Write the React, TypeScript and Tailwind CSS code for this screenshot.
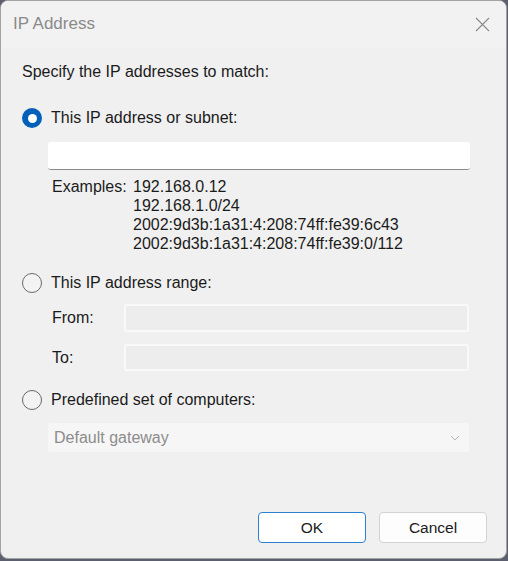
import React from 'react'

const Radio: React.FC<{ checked?: boolean }> = ({ checked }) =>
  checked ? (
    <span className="flex h-[20px] w-[20px] shrink-0 items-center justify-center rounded-full bg-[#005fb8]">
      <span className="h-[9px] w-[9px] rounded-full bg-white" />
    </span>
  ) : (
    <span className="h-[20px] w-[20px] shrink-0 rounded-full border-[1.5px] border-[#6a6a6a] bg-[#f3f3f3]" />
  )

const DisabledBox: React.FC<{ h: string }> = ({ h }) => (
  <div className={`w-[345px] ${h} rounded-[3px] border-2 border-[#f9f9f9] bg-[#ededed]`} />
)

export default function App() {
  const examples = [
    '192.168.0.12',
    '192.168.1.0/24',
    '2002:9d3b:1a31:4:208:74ff:fe39:6c43',
    '2002:9d3b:1a31:4:208:74ff:fe39:0/112',
  ]

  return (
    <div
      className="h-[561px] w-[508px] bg-[#5c5f6e] text-[16px] text-[#1b1b1b]"
      style={{ fontFamily: '"Liberation Sans", Arial, sans-serif' }}
    >
      <div className="flex h-[559px] w-[507px] flex-col overflow-hidden rounded-[8px] border border-[#a3a3a3] bg-[#f0f0f0]">
        {/* title bar */}
        <div className="flex h-[47px] shrink-0 items-center justify-between bg-[#f2f2f2] pl-[12px] pr-[16px]">
          <span className="mt-[-1px] text-[17px] text-[#8a8a8a]">IP Address</span>
          <svg width="15" height="15" viewBox="0 0 15 15" className="mt-[-1px]">
            <path d="M1 1 L14 14 M14 1 L1 14" stroke="#8a8a8a" strokeWidth="1.1" />
          </svg>
        </div>

        {/* body */}
        <div className="flex flex-col pl-[21px]">
          <div className="mt-[14px] leading-[20px]">Specify the IP addresses to match:</div>

          <label className="mt-[26px] flex items-center gap-[9px] leading-[20px]">
            <Radio checked />
            <span>This IP address or subnet:</span>
          </label>

          <div className="ml-[26px] mt-[14px] h-[28px] w-[422px] rounded-[3px] border-b border-[#8c8c8c] bg-white" />

          <div className="ml-[30px] mt-[7px] flex leading-[19px]">
            <span className="w-[81px]">Examples:</span>
            <div className="flex flex-col">
              {examples.map(e => (
                <span key={e}>{e}</span>
              ))}
            </div>
          </div>

          <label className="mt-[20px] flex items-center gap-[9px] leading-[20px]">
            <Radio />
            <span>This IP address range:</span>
          </label>

          <div className="ml-[30px] mt-[11px] flex items-center">
            <span className="w-[72px]">From:</span>
            <DisabledBox h="h-[28px]" />
          </div>

          <div className="ml-[30px] mt-[12px] flex items-center">
            <span className="w-[72px]">To:</span>
            <DisabledBox h="h-[27px]" />
          </div>

          <label className="mt-[19px] flex items-center gap-[9px] leading-[20px]">
            <Radio />
            <span>Predefined set of computers:</span>
          </label>

          <div className="ml-[26px] mt-[13px] flex h-[29px] w-[421px] items-center justify-between rounded-[3px] bg-[#f6f6f6] pl-[6px] pr-[9px]">
            <span className="text-[#8c8c8c]">Default gateway</span>
            <svg width="10" height="6" viewBox="0 0 10 6">
              <path d="M1 1 L5 5 L9 1" fill="none" stroke="#b5b5b5" strokeWidth="1" />
            </svg>
          </div>
        </div>

        {/* buttons */}
        <div className="mt-[60px] flex justify-end gap-[13px] pr-[19px]">
          <button className="h-[31px] w-[108px] rounded-[4px] border border-[#2f7fd0] bg-white text-[15.5px] text-[#1b1b1b]">
            OK
          </button>
          <button className="h-[31px] w-[108px] rounded-[4px] border border-[#d3d3d3] bg-[#fdfdfd] text-[15.5px] text-[#1b1b1b]">
            Cancel
          </button>
        </div>
      </div>
    </div>
  )
}
